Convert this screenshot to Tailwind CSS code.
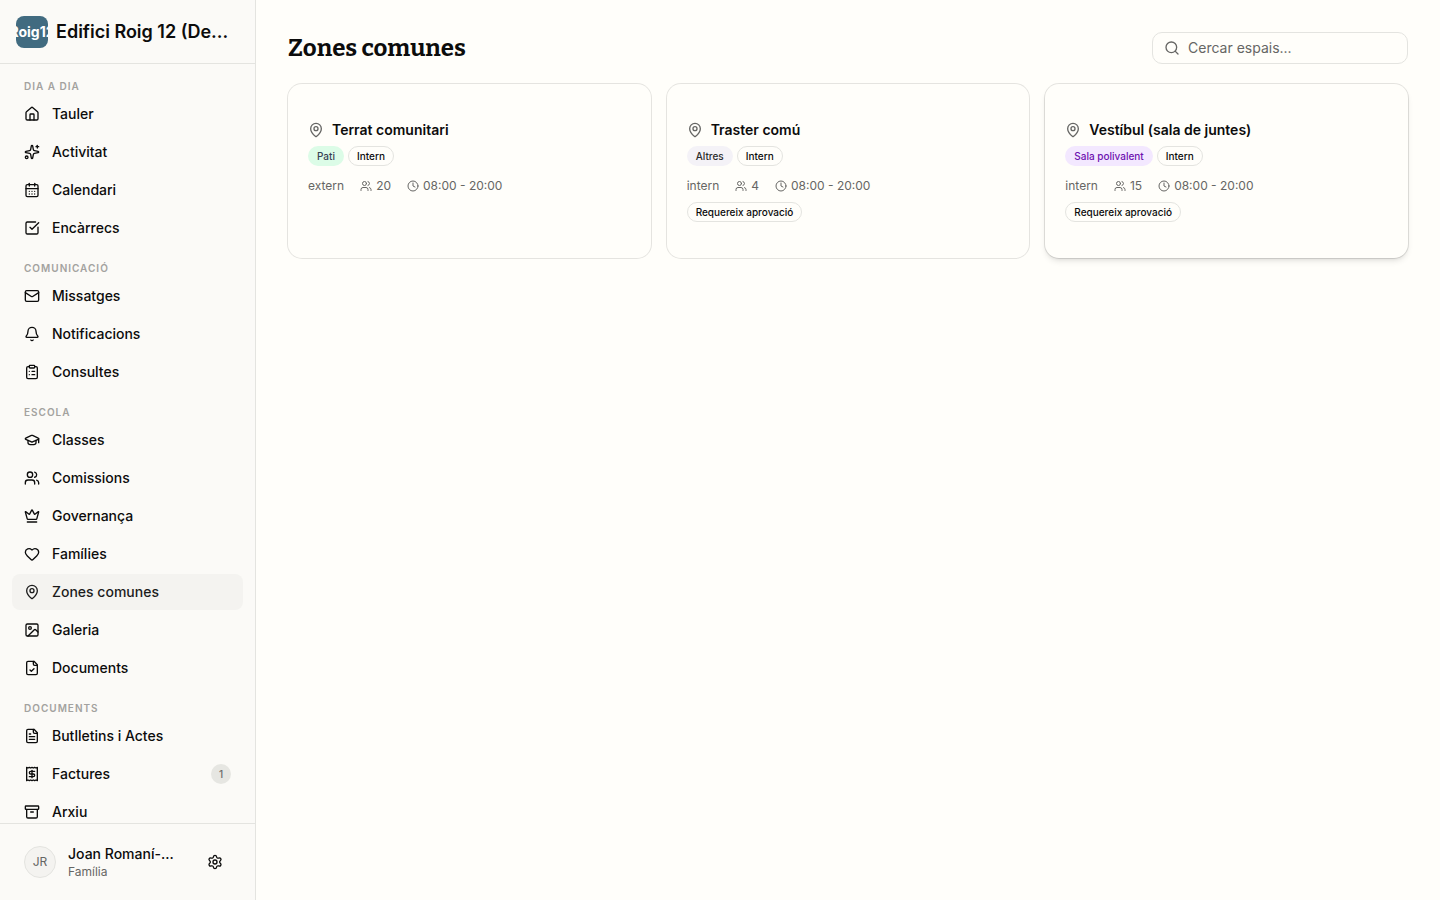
<!DOCTYPE html>
<html lang="ca">
<head>
<meta charset="utf-8">
<meta name="viewport" content="width=device-width, initial-scale=1">
<title>Zones comunes</title>
<script src="https://cdn.jsdelivr.net/npm/@tailwindcss/browser@4"></script>
</head>
<body class="flex h-screen overflow-hidden bg-[#fffefa] font-['Inter',sans-serif] text-sm text-[#0c0c0c]">
<svg class="hidden" aria-hidden="true">
  <symbol id="house" viewBox="0 0 24 24"><path d="M15 21v-8a1 1 0 0 0-1-1h-4a1 1 0 0 0-1 1v8"/><path d="M3 10a2 2 0 0 1 .709-1.528l7-5.999a2 2 0 0 1 2.582 0l7 5.999A2 2 0 0 1 21 10v9a2 2 0 0 1-2 2H5a2 2 0 0 1-2-2z"/></symbol>
  <symbol id="sparkles" viewBox="0 0 24 24"><path d="M11.017 2.814a1 1 0 0 1 1.966 0l1.051 5.558a2 2 0 0 0 1.594 1.594l5.558 1.051a1 1 0 0 1 0 1.966l-5.558 1.051a2 2 0 0 0-1.594 1.594l-1.051 5.558a1 1 0 0 1-1.966 0l-1.051-5.558a2 2 0 0 0-1.594-1.594l-5.558-1.051a1 1 0 0 1 0-1.966l5.558-1.051a2 2 0 0 0 1.594-1.594z"/><path d="M20 2v4"/><path d="M22 4h-4"/><circle cx="4" cy="20" r="2"/></symbol>
  <symbol id="calendar" viewBox="0 0 24 24"><path d="M8 2v4"/><path d="M16 2v4"/><rect width="18" height="18" x="3" y="4" rx="2"/><path d="M3 10h18"/><path d="M8 14h.01"/><path d="M12 14h.01"/><path d="M16 14h.01"/><path d="M8 18h.01"/><path d="M12 18h.01"/><path d="M16 18h.01"/></symbol>
  <symbol id="check" viewBox="0 0 24 24"><path d="M21 10.656V19a2 2 0 0 1-2 2H5a2 2 0 0 1-2-2V5a2 2 0 0 1 2-2h12.344"/><path d="m9 11 3 3L22 4"/></symbol>
  <symbol id="mail" viewBox="0 0 24 24"><path d="m22 7-8.991 5.727a2 2 0 0 1-2.009 0L2 7"/><rect x="2" y="4" width="20" height="16" rx="2"/></symbol>
  <symbol id="bell" viewBox="0 0 24 24"><path d="M10.268 21a2 2 0 0 0 3.464 0"/><path d="M3.262 15.326A1 1 0 0 0 4 17h16a1 1 0 0 0 .74-1.673C19.41 13.956 18 12.499 18 8A6 6 0 0 0 6 8c0 4.499-1.411 5.956-2.738 7.326"/></symbol>
  <symbol id="clipboard" viewBox="0 0 24 24"><rect width="8" height="4" x="8" y="2" rx="1"/><path d="M16 4h2a2 2 0 0 1 2 2v14a2 2 0 0 1-2 2H6a2 2 0 0 1-2-2V6a2 2 0 0 1 2-2h2"/><path d="M12 11h4"/><path d="M12 16h4"/><path d="M8 11h.01"/><path d="M8 16h.01"/></symbol>
  <symbol id="cap" viewBox="0 0 24 24"><path d="M21.42 10.922a1 1 0 0 0-.019-1.838L12.83 5.18a2 2 0 0 0-1.66 0L2.6 9.08a1 1 0 0 0 0 1.832l8.57 3.908a2 2 0 0 0 1.66 0z"/><path d="M22 10v6"/><path d="M6 12.5V16a6 3 0 0 0 12 0v-3.5"/></symbol>
  <symbol id="users" viewBox="0 0 24 24"><path d="M16 21v-2a4 4 0 0 0-4-4H6a4 4 0 0 0-4 4v2"/><path d="M16 3.128a4 4 0 0 1 0 7.744"/><path d="M22 21v-2a4 4 0 0 0-3-3.87"/><circle cx="9" cy="7" r="4"/></symbol>
  <symbol id="crown" viewBox="0 0 24 24"><path d="M11.562 3.266a.5.5 0 0 1 .876 0L15.39 8.87a1 1 0 0 0 1.516.294L21.183 5.5a.5.5 0 0 1 .798.519l-2.834 10.246a1 1 0 0 1-.956.734H5.81a1 1 0 0 1-.957-.734L2.02 6.02a.5.5 0 0 1 .798-.519l4.276 3.664a1 1 0 0 0 1.516-.294z"/><path d="M5 21h14"/></symbol>
  <symbol id="heart" viewBox="0 0 24 24"><path d="M2 9.5a5.5 5.5 0 0 1 9.591-3.676.56.56 0 0 0 .818 0A5.49 5.49 0 0 1 22 9.5c0 2.29-1.5 4-3 5.5l-5.492 5.313a2 2 0 0 1-3 .019L5 15c-1.5-1.5-3-3.2-3-5.5"/></symbol>
  <symbol id="pin" viewBox="0 0 24 24"><path d="M20 10c0 4.993-5.539 10.193-7.399 11.799a1 1 0 0 1-1.202 0C9.539 20.193 4 14.993 4 10a8 8 0 0 1 16 0"/><circle cx="12" cy="10" r="3"/></symbol>
  <symbol id="image" viewBox="0 0 24 24"><rect width="18" height="18" x="3" y="3" rx="2"/><circle cx="9" cy="9" r="2"/><path d="m21 15-3.086-3.086a2 2 0 0 0-2.828 0L6 21"/></symbol>
  <symbol id="filecheck" viewBox="0 0 24 24"><path d="M15 2H6a2 2 0 0 0-2 2v16a2 2 0 0 0 2 2h12a2 2 0 0 0 2-2V7Z"/><path d="M14 2v4a2 2 0 0 0 2 2h4"/><path d="m9 15 2 2 4-4"/></symbol>
  <symbol id="filetext" viewBox="0 0 24 24"><path d="M15 2H6a2 2 0 0 0-2 2v16a2 2 0 0 0 2 2h12a2 2 0 0 0 2-2V7Z"/><path d="M14 2v4a2 2 0 0 0 2 2h4"/><path d="M10 9H8"/><path d="M16 13H8"/><path d="M16 17H8"/></symbol>
  <symbol id="receipt" viewBox="0 0 24 24"><path d="M4 2v20l2-1 2 1 2-1 2 1 2-1 2 1 2-1 2 1V2l-2 1-2-1-2 1-2-1-2 1-2-1-2 1Z"/><path d="M16 8h-6a2 2 0 1 0 0 4h4a2 2 0 1 1 0 4H8"/><path d="M12 17.5v-11"/></symbol>
  <symbol id="archive" viewBox="0 0 24 24"><rect width="20" height="5" x="2" y="3" rx="1"/><path d="M4 8v11a2 2 0 0 0 2 2h12a2 2 0 0 0 2-2V8"/><path d="M10 12h4"/></symbol>
  <symbol id="gear" viewBox="0 0 24 24"><path d="M9.671 4.136a2.34 2.34 0 0 1 4.659 0 2.34 2.34 0 0 0 3.319 1.915 2.34 2.34 0 0 1 2.33 4.033 2.34 2.34 0 0 0 0 3.831 2.34 2.34 0 0 1-2.33 4.033 2.34 2.34 0 0 0-3.319 1.915 2.34 2.34 0 0 1-4.659 0 2.34 2.34 0 0 0-3.32-1.915 2.34 2.34 0 0 1-2.33-4.033 2.34 2.34 0 0 0 0-3.831A2.34 2.34 0 0 1 6.35 6.051a2.34 2.34 0 0 0 3.319-1.915"/><circle cx="12" cy="12" r="3"/></symbol>
  <symbol id="clock" viewBox="0 0 24 24"><circle cx="12" cy="12" r="10"/><path d="M12 6v6l4 2"/></symbol>
  <symbol id="search" viewBox="0 0 24 24"><path d="m21 21-4.34-4.34"/><circle cx="11" cy="11" r="8"/></symbol>
</svg>

<aside class="flex w-64 shrink-0 flex-col border-r border-[#e4e4e0] bg-[#fbfaf7]">
  <header class="flex h-16 shrink-0 items-center gap-2 border-b border-[#e4e4e0] px-4">
    <div class="flex size-8 shrink-0 items-center justify-center overflow-hidden rounded-lg bg-[#416b80] text-sm font-bold text-white"><span>Roig12</span></div>
    <span class="min-w-0 whitespace-nowrap text-lg font-semibold">Edifici Roig 12 (De…</span>
  </header>

  <nav class="min-h-0 flex-1 overflow-hidden px-3 font-medium [&_a]:flex [&_a]:h-9 [&_a]:items-center [&_a]:gap-3 [&_a]:rounded-lg [&_a]:px-3 [&_h2]:px-3 [&_h2]:text-[10px] [&_h2]:leading-4 [&_h2]:font-semibold [&_h2]:tracking-widest [&_h2]:text-[#a3a29f] [&_h2]:uppercase [&_section]:flex [&_section]:flex-col [&_section]:gap-0.5 [&_section]:pt-3.5 [&_svg]:size-4 [&_svg]:shrink-0 [&_svg]:fill-none [&_svg]:stroke-current [&_svg]:stroke-2" aria-label="Principal">
    <section>
      <h2>Dia a dia</h2>
      <a href="#"><svg stroke-linecap="round" stroke-linejoin="round"><use href="#house"/></svg>Tauler</a>
      <a href="#"><svg stroke-linecap="round" stroke-linejoin="round"><use href="#sparkles"/></svg>Activitat</a>
      <a href="#"><svg stroke-linecap="round" stroke-linejoin="round"><use href="#calendar"/></svg>Calendari</a>
      <a href="#"><svg stroke-linecap="round" stroke-linejoin="round"><use href="#check"/></svg>Encàrrecs</a>
    </section>
    <section>
      <h2>Comunicació</h2>
      <a href="#"><svg stroke-linecap="round" stroke-linejoin="round"><use href="#mail"/></svg>Missatges</a>
      <a href="#"><svg stroke-linecap="round" stroke-linejoin="round"><use href="#bell"/></svg>Notificacions</a>
      <a href="#"><svg stroke-linecap="round" stroke-linejoin="round"><use href="#clipboard"/></svg>Consultes</a>
    </section>
    <section>
      <h2>Escola</h2>
      <a href="#"><svg stroke-linecap="round" stroke-linejoin="round"><use href="#cap"/></svg>Classes</a>
      <a href="#"><svg stroke-linecap="round" stroke-linejoin="round"><use href="#users"/></svg>Comissions</a>
      <a href="#"><svg stroke-linecap="round" stroke-linejoin="round"><use href="#crown"/></svg>Governança</a>
      <a href="#"><svg stroke-linecap="round" stroke-linejoin="round"><use href="#heart"/></svg>Famílies</a>
      <a href="#" class="bg-[#f4f3f0] text-[#1c1c1c]" aria-current="page"><svg stroke-linecap="round" stroke-linejoin="round"><use href="#pin"/></svg>Zones comunes</a>
      <a href="#"><svg stroke-linecap="round" stroke-linejoin="round"><use href="#image"/></svg>Galeria</a>
      <a href="#"><svg stroke-linecap="round" stroke-linejoin="round"><use href="#filecheck"/></svg>Documents</a>
    </section>
    <section>
      <h2>Documents</h2>
      <a href="#"><svg stroke-linecap="round" stroke-linejoin="round"><use href="#filetext"/></svg>Butlletins i Actes</a>
      <a href="#"><svg stroke-linecap="round" stroke-linejoin="round"><use href="#receipt"/></svg>Factures<span class="ml-auto flex size-5 items-center justify-center rounded-full bg-[#e6e6e2] text-[10px] text-[#6b6b69]">1</span></a>
      <a href="#"><svg stroke-linecap="round" stroke-linejoin="round"><use href="#archive"/></svg>Arxiu</a>
    </section>
  </nav>

  <footer class="flex shrink-0 items-center gap-3 border-t border-[#e4e4e0] px-6 py-5">
    <span class="flex size-8 shrink-0 items-center justify-center rounded-full border border-[#e4e4e0] bg-[#f4f3f0] text-xs text-[#666664]">JR</span>
    <div class="min-w-0 flex-1 whitespace-nowrap">
      <p class="text-sm font-medium">Joan Romaní-…</p>
      <p class="text-xs text-[#666664]">Família</p>
    </div>
    <button type="button" aria-label="Configuració" class="flex size-8 items-center justify-center rounded-lg"><svg class="size-4 fill-none stroke-current stroke-2" stroke-linecap="round" stroke-linejoin="round"><use href="#gear"/></svg></button>
  </footer>
</aside>

<main class="min-w-0 flex-1 overflow-auto p-8">
  <div class="mb-5 flex items-center justify-between gap-4">
    <h1 class="font-['Bitter','DejaVu_Serif_Condensed','DejaVu_Serif',serif] text-2xl font-bold">Zones comunes</h1>
    <label class="flex h-8 w-64 items-center gap-2 rounded-[10px] border border-[#e4e4e0] px-[11px]">
      <svg class="size-4 shrink-0 fill-none stroke-[#666664] stroke-2" stroke-linecap="round" stroke-linejoin="round" aria-hidden="true"><use href="#search"/></svg>
      <input type="search" aria-label="Cercar espais" placeholder="Cercar espais..." class="min-w-0 flex-1 bg-transparent outline-none placeholder:text-[#666664]">
    </label>
  </div>

  <div class="grid grid-cols-3 gap-4 [&_svg]:shrink-0 [&_svg]:fill-none [&_svg]:stroke-current [&_svg]:stroke-2">
    <article class="rounded-[14px] px-5 py-9 ring-1 ring-black/10">
      <h2 class="flex items-center gap-2 font-semibold"><svg class="size-4 text-[#666664]" stroke-linecap="round" stroke-linejoin="round"><use href="#pin"/></svg>Terrat comunitari</h2>
      <div class="mt-1.5 flex gap-1 text-[10px] font-medium">
        <span class="flex h-5 items-center rounded-full border border-transparent bg-[#dcfce7] px-2 text-[#364153]">Pati</span>
        <span class="flex h-5 items-center rounded-full border border-[#e4e4e0] px-2">Intern</span>
      </div>
      <div class="mt-3 flex gap-4 text-xs text-[#666664]">
        <span>extern</span>
        <span class="flex items-center gap-1"><svg class="size-3" stroke-linecap="round" stroke-linejoin="round"><use href="#users"/></svg>20</span>
        <span class="flex items-center gap-1"><svg class="size-3" stroke-linecap="round" stroke-linejoin="round"><use href="#clock"/></svg>08:00 - 20:00</span>
      </div>
    </article>

    <article class="rounded-[14px] px-5 py-9 ring-1 ring-black/10">
      <h2 class="flex items-center gap-2 font-semibold"><svg class="size-4 text-[#666664]" stroke-linecap="round" stroke-linejoin="round"><use href="#pin"/></svg>Traster comú</h2>
      <div class="mt-1.5 flex gap-1 text-[10px] font-medium">
        <span class="flex h-5 items-center rounded-full border border-transparent bg-[#f4f2f7] px-2 text-[#2b2b2b]">Altres</span>
        <span class="flex h-5 items-center rounded-full border border-[#e4e4e0] px-2">Intern</span>
      </div>
      <div class="mt-3 flex gap-4 text-xs text-[#666664]">
        <span>intern</span>
        <span class="flex items-center gap-1"><svg class="size-3" stroke-linecap="round" stroke-linejoin="round"><use href="#users"/></svg>4</span>
        <span class="flex items-center gap-1"><svg class="size-3" stroke-linecap="round" stroke-linejoin="round"><use href="#clock"/></svg>08:00 - 20:00</span>
      </div>
      <div class="mt-2 flex text-[10px] font-medium"><span class="flex h-5 items-center rounded-full border border-[#e4e4e0] px-2">Requereix aprovació</span></div>
    </article>

    <article class="rounded-[14px] bg-[#fffefa] px-5 py-9 shadow-md ring-1 ring-black/10">
      <h2 class="flex items-center gap-2 font-semibold"><svg class="size-4 text-[#666664]" stroke-linecap="round" stroke-linejoin="round"><use href="#pin"/></svg>Vestíbul (sala de juntes)</h2>
      <div class="mt-1.5 flex gap-1 text-[10px] font-medium">
        <span class="flex h-5 items-center rounded-full border border-transparent bg-[#f3e8ff] px-2 text-[#6e11b0]">Sala polivalent</span>
        <span class="flex h-5 items-center rounded-full border border-[#e4e4e0] px-2">Intern</span>
      </div>
      <div class="mt-3 flex gap-4 text-xs text-[#666664]">
        <span>intern</span>
        <span class="flex items-center gap-1"><svg class="size-3" stroke-linecap="round" stroke-linejoin="round"><use href="#users"/></svg>15</span>
        <span class="flex items-center gap-1"><svg class="size-3" stroke-linecap="round" stroke-linejoin="round"><use href="#clock"/></svg>08:00 - 20:00</span>
      </div>
      <div class="mt-2 flex text-[10px] font-medium"><span class="flex h-5 items-center rounded-full border border-[#e4e4e0] px-2">Requereix aprovació</span></div>
    </article>
  </div>
</main>
</body>
</html>
